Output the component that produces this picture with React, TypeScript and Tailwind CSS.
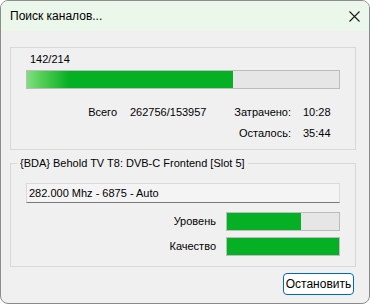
import React from 'react';

const font = { fontFamily: '"Liberation Sans", "Noto Sans", sans-serif' };

const Bar: React.FC<{ value: number; glow?: boolean; className?: string }> = ({ value, glow, className }) => (
  <div className={`border border-[#bcbcbc] bg-[#e6e6e6] ${className ?? ''}`}>
    <div
      className={`h-full ${glow ? 'bg-[linear-gradient(to_right,#7fe080_0px,#55cf58_14px,#06b025_42px)]' : 'bg-[#06b025]'}`}
      style={{ width: `${value}%` }}
    />
  </div>
);

export default function App() {
  return (
    <div className="w-[370px] h-[304px] bg-white text-[#000]" style={font}>
      <div className="w-full h-full rounded-[8px] border border-[#8c8c8c] overflow-hidden bg-[#f0f0f0] flex flex-col">
        <div className="h-[30px] shrink-0 bg-[#eaf7ea] flex items-center justify-between pl-[9px] pr-[9px]">
          <span className="text-[12px] leading-[16px]">Поиск каналов...</span>
          <svg width="11" height="11" viewBox="0 0 11 11" className="mt-[1px]">
            <path d="M0.5 0.5 L10.5 10.5 M10.5 0.5 L0.5 10.5" stroke="#1a1a1a" strokeWidth="1.1" fill="none" />
          </svg>
        </div>

        <div className="flex-1 pl-[9px] pt-[16px] text-[11px]">
          <div className="w-[346px] h-[103px] border border-[#d8d8d8] px-[15px] pt-[4px]">
            <div className="ml-[4px] leading-[15px]">142/214</div>
            <Bar value={66} glow className="mt-[3px] w-[314px] h-[19px]" />
            <div className="mt-[13px] flex flex-col">
              <div className="h-[21px] flex items-center">
                <span className="w-[91px] text-right">Всего</span>
                <span className="ml-[13px] w-[90px]">262756/153957</span>
                <span className="w-[71px] text-right">Затрачено:</span>
                <span className="ml-[12px]">10:28</span>
              </div>
              <div className="h-[21px] flex items-center">
                <span className="w-[265px] text-right">Осталось:</span>
                <span className="ml-[12px]">35:44</span>
              </div>
            </div>
          </div>

          <fieldset className="mt-[5px] w-[346px] h-[112px] border border-[#d8d8d8] px-0">
            <legend className="ml-[6px] px-[3px] leading-[16px] text-[11px]">
              {'{BDA} Behold TV T8: DVB-C Frontend [Slot 5]'}
            </legend>
            <div className="px-[15px]">
              <div className="mt-[12px] w-[314px] h-[20px] border border-[#dadada] border-b-[#7a7a7a] bg-[#f4f4f4] flex items-center pl-[2px]">
                282.000 Mhz - 6875 - Auto
              </div>
              <div className="mt-[9px] w-[314px] flex flex-col gap-[6px]">
                <div className="flex items-center justify-end gap-[10px]">
                  <span>Уровень</span>
                  <Bar value={66} className="w-[114px] h-[19px]" />
                </div>
                <div className="flex items-center justify-end gap-[10px]">
                  <span>Качество</span>
                  <Bar value={100} className="w-[114px] h-[19px]" />
                </div>
              </div>
            </div>
          </fieldset>

          <div className="mt-[6px] flex">
            <button className="ml-[273px] w-[71px] h-[22px] rounded-[4px] border border-[#0067c0] bg-white text-[12px] leading-[16px]">
              Остановить
            </button>
          </div>
        </div>
      </div>
    </div>
  );
}
